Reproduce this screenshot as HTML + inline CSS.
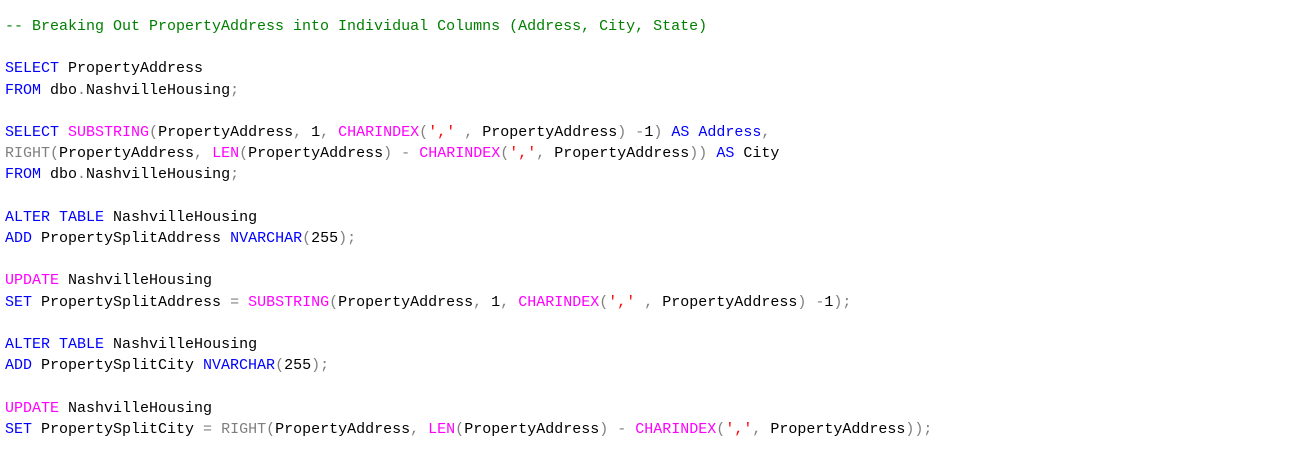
<html><head><style>
body{margin:0;background:#fff;width:1294px;height:473px;overflow:hidden}
pre{margin:0;position:absolute;left:5px;top:16px;font-family:"Liberation Mono",monospace;font-size:15px;line-height:21.2px;color:#000}
.c{color:#008000}.k{color:#0000ff}.f{color:#ff00ff}.s{color:#ff0000}.g{color:#808080}
</style></head><body><pre><span class="c">-- Breaking Out PropertyAddress into Individual Columns (Address, City, State)</span>

<span class="k">SELECT</span> PropertyAddress
<span class="k">FROM</span> dbo<span class="g">.</span>NashvilleHousing<span class="g">;</span>

<span class="k">SELECT</span> <span class="f">SUBSTRING</span><span class="g">(</span>PropertyAddress<span class="g">,</span> 1<span class="g">,</span> <span class="f">CHARINDEX</span><span class="g">(</span><span class="s">','</span> <span class="g">,</span> PropertyAddress<span class="g">)</span> <span class="g">-</span>1<span class="g">)</span> <span class="k">AS</span> <span class="k">Address</span><span class="g">,</span>
<span class="g">RIGHT(</span>PropertyAddress<span class="g">,</span> <span class="f">LEN</span><span class="g">(</span>PropertyAddress<span class="g">)</span> <span class="g">-</span> <span class="f">CHARINDEX</span><span class="g">(</span><span class="s">','</span><span class="g">,</span> PropertyAddress<span class="g">))</span> <span class="k">AS</span> City
<span class="k">FROM</span> dbo<span class="g">.</span>NashvilleHousing<span class="g">;</span>

<span class="k">ALTER</span> <span class="k">TABLE</span> NashvilleHousing
<span class="k">ADD</span> PropertySplitAddress <span class="k">NVARCHAR</span><span class="g">(</span>255<span class="g">);</span>

<span class="f">UPDATE</span> NashvilleHousing
<span class="k">SET</span> PropertySplitAddress <span class="g">=</span> <span class="f">SUBSTRING</span><span class="g">(</span>PropertyAddress<span class="g">,</span> 1<span class="g">,</span> <span class="f">CHARINDEX</span><span class="g">(</span><span class="s">','</span> <span class="g">,</span> PropertyAddress<span class="g">)</span> <span class="g">-</span>1<span class="g">);</span>

<span class="k">ALTER</span> <span class="k">TABLE</span> NashvilleHousing
<span class="k">ADD</span> PropertySplitCity <span class="k">NVARCHAR</span><span class="g">(</span>255<span class="g">);</span>

<span class="f">UPDATE</span> NashvilleHousing
<span class="k">SET</span> PropertySplitCity <span class="g">=</span> <span class="g">RIGHT(</span>PropertyAddress<span class="g">,</span> <span class="f">LEN</span><span class="g">(</span>PropertyAddress<span class="g">)</span> <span class="g">-</span> <span class="f">CHARINDEX</span><span class="g">(</span><span class="s">','</span><span class="g">,</span> PropertyAddress<span class="g">));</span>
</pre></body></html>
